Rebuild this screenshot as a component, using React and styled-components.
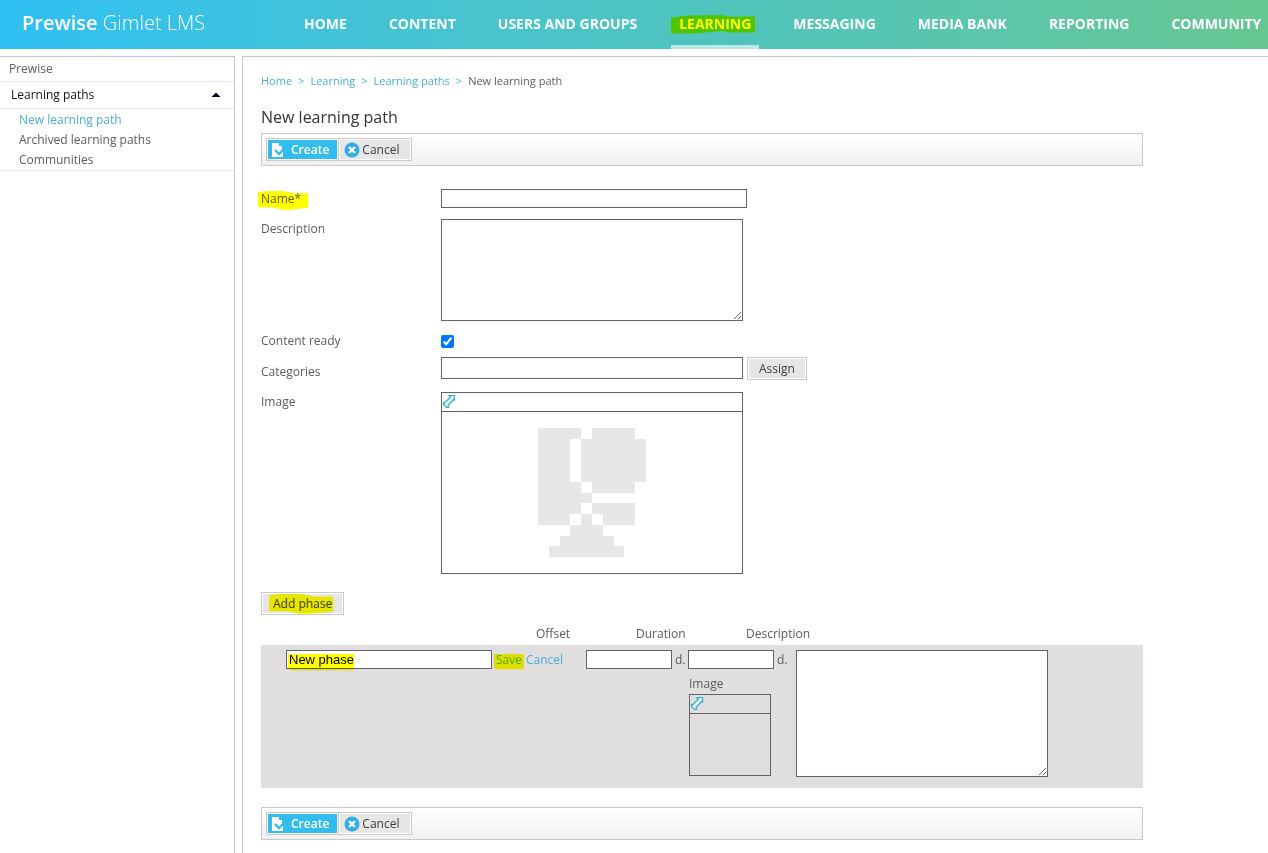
import React, { useState } from "react";
import styled, { createGlobalStyle } from "styled-components";

function App() {
  return (
    <>
      <GlobalStyle />
      <Header>
        <Brand href="#">
          <strong>Prewise</strong> Gimlet LMS
        </Brand>
        <Nav>
          {NAV_ITEMS.map(item => (
            <NavLink key={item} href="#" $active={item === "LEARNING"}>
              {item}
              {item === "LEARNING" && (
                <Marker left={0} top={15} width={84} height={19} shape="wide" />
              )}
            </NavLink>
          ))}
        </Nav>
      </Header>
      <Body>
        <Sidebar>
          <SideRoot href="#">Prewise</SideRoot>
          <SideSection type="button">
            Learning paths
            <Caret viewBox="0 0 8 4" shapeRendering="crispEdges">
              <path d="M3 0h2v1h1v1h1v1h1v1H0V3h1V2h1V1h1z" fill="#00082e" />
            </Caret>
          </SideSection>
          <SideList>
            {SIDE_ITEMS.map(item => (
              <li key={item}>
                <SideLink href="#" $active={item === "New learning path"}>
                  {item}
                </SideLink>
              </li>
            ))}
          </SideList>
        </Sidebar>
        <Main>
          <Breadcrumb>
            <a href="#">Home</a>
            <i>&gt;</i>
            <a href="#">Learning</a>
            <i>&gt;</i>
            <a href="#">Learning paths</a>
            <i>&gt;</i>
            <span>New learning path</span>
          </Breadcrumb>
          <Title>New learning path</Title>
          <FormToolbar />
          <PathForm />
          <AddPhase type="button">
            Add phase
            <Marker left={7} top={1} width={64} height={20} shape="wave" />
          </AddPhase>
          <PhaseEditor />
          <FormToolbar />
        </Main>
      </Body>
    </>
  );
}

function PathForm() {
  const [ready, setReady] = useState(true);

  return (
    <Form>
      <Row $after={10}>
        <Label htmlFor="name">
          Name*
          <Marker left={-3} top={2} width={50} height={19} shape="wave" />
        </Label>
        <TextInput id="name" $width={306} />
      </Row>
      <Row $after={10}>
        <Label htmlFor="description">Description</Label>
        <TextArea id="description" $width={302} $height={102} />
      </Row>
      <Row $after={6}>
        <Label htmlFor="ready">Content ready</Label>
        <CheckBox
          id="ready"
          type="checkbox"
          checked={ready}
          onChange={e => setReady(e.target.checked)}
        />
      </Row>
      <Row $after={10}>
        <Label htmlFor="categories" $lowered>
          Categories
        </Label>
        <Categories>
          <TextInput id="categories" $width={302} $tall />
          <Button type="button">Assign</Button>
        </Categories>
      </Row>
      <Row $after={18}>
        <Label as="span">Image</Label>
        <ImageBox $width={302}>
          <PickImage type="button" aria-label="Choose image">
            <ArrowIcon />
          </PickImage>
          <Preview $height={161}>
            <Placeholder />
          </Preview>
        </ImageBox>
      </Row>
    </Form>
  );
}

function PhaseEditor() {
  const [name, setName] = useState("New phase");

  return (
    <Phases>
      <PhaseHead>
        <span />
        <span>Offset</span>
        <span>Duration</span>
        <span>Description</span>
      </PhaseHead>
      <PhaseRow>
        <PhaseName>
          <InputWrap>
            <TextInput
              aria-label="Phase name"
              value={name}
              onChange={e => setName(e.target.value)}
              $width={206}
            />
            <Marker left={2} top={4} width={66} height={17} shape="flat" />
          </InputWrap>
          <PhaseAction href="#">
            Save
            <Marker left={-2} top={4} width={30} height={16} shape="flat" />
          </PhaseAction>
          <PhaseAction href="#">Cancel</PhaseAction>
        </PhaseName>
        <OffsetColumn>
          <Days>
            <TextInput aria-label="Offset" $width={86} />
            <span>d.</span>
          </Days>
        </OffsetColumn>
        <DurationColumn>
          <Days>
            <TextInput aria-label="Duration" $width={86} />
            <span>d.</span>
          </Days>
          <PhaseImage>
            <span>Image</span>
            <ImageBox $width={82}>
              <PickImage type="button" aria-label="Choose phase image">
                <ArrowIcon />
              </PickImage>
              <Preview $height={61} />
            </ImageBox>
          </PhaseImage>
        </DurationColumn>
        <TextArea aria-label="Phase description" $width={252} $height={127} />
      </PhaseRow>
    </Phases>
  );
}

function FormToolbar() {
  return (
    <Toolbar>
      <ToolButton type="submit" $primary>
        <svg width="16" height="16" viewBox="0 0 16 16">
          <path d="M1 1h7v3h3v4l1-1v8H1z" fill="#fff" />
          <path d="M4 8l4 4 5-5" fill="none" stroke="#32bdef" strokeWidth="2.4" />
        </svg>
        Create
      </ToolButton>
      <ToolButton type="button">
        <svg width="16" height="16" viewBox="0 0 16 16">
          <circle cx="8" cy="8" r="7.5" fill="#2eaee4" />
          <path d="M5 5l6 6M11 5l-6 6" stroke="#fff" strokeWidth="2.4" />
        </svg>
        Cancel
      </ToolButton>
    </Toolbar>
  );
}

function ArrowIcon() {
  return (
    <svg width="13" height="14" viewBox="0 0 13 14">
      <path
        d="M6 .5h5.5v4.500l-1-.5L5 10.500l.5 2h-2l-3-3v-2l1 .5 6-6z"
        fill="#eafaff"
        stroke="#2aaed0"
        strokeWidth="1.2"
      />
    </svg>
  );
}

function Placeholder() {
  return (
    <svg
      width="108"
      height="129"
      viewBox="0 0 10 12"
      preserveAspectRatio="none"
      shapeRendering="crispEdges"
      fill="#e7e7e7"
    >
      <path d="M0 0h4v1H3v4h1v1h1v1H4v1H3v1H0z" />
      <path d="M5 0h4v1h1v4H9v1H5V5H4V1h1z" />
      <path d="M5 7h4v2H6V8H5z" />
      <path d="M4 8h1v1h1v1h1v1h1v1H1v-1h1v-1h1V9h1z" />
    </svg>
  );
}

function Marker({ left, top, width, height, shape }) {
  return (
    <MarkerSvg
      $left={left}
      $top={top}
      width={width}
      height={height}
      viewBox="0 0 100 100"
      preserveAspectRatio="none"
      aria-hidden="true"
    >
      <path d={MARKER_SHAPES[shape]} fill="#ffff00" />
    </MarkerSvg>
  );
}

const NAV_ITEMS = [
  "HOME",
  "CONTENT",
  "USERS AND GROUPS",
  "LEARNING",
  "MESSAGING",
  "MEDIA BANK",
  "REPORTING",
  "COMMUNITY",
];

const SIDE_ITEMS = [
  "New learning path",
  "Archived learning paths",
  "Communities",
];

const MARKER_SHAPES = {
  flat: "M0 0H100V96H4L0 80z",
  wide: "M0 14L20 2L60 0L68 8H100V92H70L60 84L30 98H0z",
  wave: "M0 5L20 0H50L70 12H100V88L85 94L60 100L45 98L30 86H0z",
};

const GlobalStyle = createGlobalStyle`
  * {
    box-sizing: border-box;
  }

  body {
    margin: 0;
    background: #fff;
    color: #5c5c5c;
    font-family: "Open Sans", "Noto Sans", sans-serif;
    font-size: 12px;
    line-height: 20px;
  }

  a {
    color: #4baedb;
    text-decoration: none;
  }

  button {
    font-family: inherit;
    font-size: inherit;
  }
`;

const Header = styled.header`
  display: flex;
  height: 49px;
  overflow: hidden;
  background: linear-gradient(to right, #2fc0f4, #45c3d2 33%, #54c5b5 66%, #67c793);
`;

const Brand = styled.a`
  flex: none;
  width: 296px;
  padding-left: 22px;
  color: #fff;
  font-size: 20px;
  font-weight: 300;
  line-height: 46px;

  strong {
    font-weight: 600;
  }
`;

const Nav = styled.nav`
  display: flex;
  gap: 26px;
`;

const NavLink = styled.a`
  position: relative;
  padding: 0 8px;
  border-bottom: 4px solid
    ${props => (props.$active ? "rgba(255, 255, 255, 0.6)" : "transparent")};
  color: #fff;
  font-size: 14px;
  font-weight: 700;
  line-height: 48px;
  white-space: nowrap;
`;

const MarkerSvg = styled.svg`
  position: absolute;
  left: ${props => props.$left}px;
  top: ${props => props.$top}px;
  mix-blend-mode: multiply;
  pointer-events: none;
`;

const Body = styled.div`
  display: flex;
  gap: 7px;
  min-height: calc(100vh - 49px);
  padding-top: 7px;
`;

const Sidebar = styled.aside`
  flex: none;
  width: 235px;
  border-top: 1px solid #c6c6cc;
  border-right: 1px solid #c6c6cc;
`;

const SideRoot = styled.a`
  display: block;
  padding-left: 9px;
  border-bottom: 1px solid #e6e6e6;
  color: #5c5c5c;
  line-height: 24px;
`;

const SideSection = styled.button`
  display: flex;
  align-items: center;
  justify-content: space-between;
  width: 100%;
  padding: 0 14px 0 11px;
  border: 0;
  border-bottom: 1px solid #e6e6e6;
  background: none;
  color: #111;
  line-height: 26px;
`;

const Caret = styled.svg`
  width: 8px;
  height: 4px;
`;

const SideList = styled.ul`
  margin: 0;
  padding: 1px 0 0;
  border-bottom: 1px solid #e6e6e6;
  list-style: none;
`;

const SideLink = styled.a`
  display: block;
  padding-left: 19px;
  color: ${props => (props.$active ? "#4baedb" : "#5c5c5c")};
`;

const Main = styled.main`
  flex: 1;
  min-width: 0;
  padding: 14px 18px 13px;
  border-top: 1px solid #c6c6cc;
  border-left: 1px solid #c6c6cc;
`;

const Breadcrumb = styled.nav`
  display: flex;
  gap: 6px;
  font-size: 11px;

  i {
    color: #4baedb;
    font-style: normal;
  }
`;

const Title = styled.h1`
  margin: 14px 0 4px;
  color: #333;
  font-size: 16px;
  font-weight: 400;
  line-height: 24px;
`;

const Toolbar = styled.div`
  display: flex;
  max-width: 882px;
  height: 33px;
  padding: 4px;
  border: 1px solid #c9c9cb;
  background: linear-gradient(#fff, #f0f0f0);
`;

const Button = styled.button`
  position: relative;
  height: 23px;
  padding: 0 11px;
  border: 1px solid #c9c9cb;
  box-shadow: inset 0 0 0 1px #fff;
  background: #e6e6e6;
  color: #3c3c3c;
  line-height: 20px;
`;

const ToolButton = styled(Button)`
  display: flex;
  align-items: center;
  gap: ${props => (props.$primary ? 4 : 2)}px;
  padding: ${props => (props.$primary ? "0 9px 0 4px" : "0 12px 0 5px")};
  background: ${props => (props.$primary ? "#32bdef" : "#e6e6e6")};
  color: ${props => (props.$primary ? "#fff" : "#3c3c3c")};
  font-weight: ${props => (props.$primary ? 600 : 400)};

  & + & {
    margin-left: -1px;
  }
`;

const Form = styled.form`
  padding-top: 23px;
`;

const Row = styled.div`
  display: flex;
  align-items: flex-start;
  margin-bottom: ${props => props.$after}px;
`;

const Label = styled.label`
  position: relative;
  flex: none;
  width: 180px;
  padding-top: ${props => (props.$lowered ? 5 : 0)}px;
  line-height: 20px;
`;

const TextInput = styled.input`
  flex: none;
  width: ${props => props.$width}px;
  height: ${props => (props.$tall ? 22 : 19)}px;
  padding: 0 2px;
  border: 1px solid #626262;
  background: #fff;
  color: #000;
  font-family: "Liberation Sans", Arial, sans-serif;
  font-size: 13px;
`;

const TextArea = styled.textarea`
  display: block;
  width: ${props => props.$width}px;
  height: ${props => props.$height}px;
  border: 1px solid #626262;
  background: #fff;
`;

const CheckBox = styled.input`
  width: 13px;
  height: 13px;
  margin: 4px 0 3px;
`;

const Categories = styled.div`
  display: flex;
  gap: 4px;
`;

const ImageBox = styled.div`
  width: ${props => props.$width}px;
  border: 1px solid #626262;
`;

const PickImage = styled.button`
  display: flex;
  align-items: center;
  width: 100%;
  height: 19px;
  padding: 0 1px;
  border: 0;
  border-bottom: 1px solid #626262;
  background: none;
`;

const Preview = styled.div`
  display: flex;
  align-items: center;
  justify-content: center;
  height: ${props => props.$height}px;
`;

const AddPhase = styled(Button)`
  display: block;
`;

const Phases = styled.section`
  max-width: 882px;
  margin: 9px 0 19px;
`;

const PhaseHead = styled.div`
  display: grid;
  grid-template-columns: 275px 100px 110px 1fr;
  padding-bottom: 1px;
`;

const PhaseRow = styled.div`
  display: flex;
  align-items: flex-start;
  height: 143px;
  padding: 5px 0 0 25px;
  background: #e0dede;
`;

const PhaseName = styled.div`
  display: flex;
  gap: 4px;
  width: 300px;
`;

const InputWrap = styled.div`
  position: relative;
  display: flex;
  align-items: flex-start;
`;

const PhaseAction = styled.a`
  position: relative;
`;

const OffsetColumn = styled.div`
  width: 102px;
`;

const DurationColumn = styled.div`
  width: 108px;
`;

const Days = styled.div`
  display: flex;
  gap: 3px;
`;

const PhaseImage = styled.div`
  padding: 4px 0 0 1px;
`;

export default App;
